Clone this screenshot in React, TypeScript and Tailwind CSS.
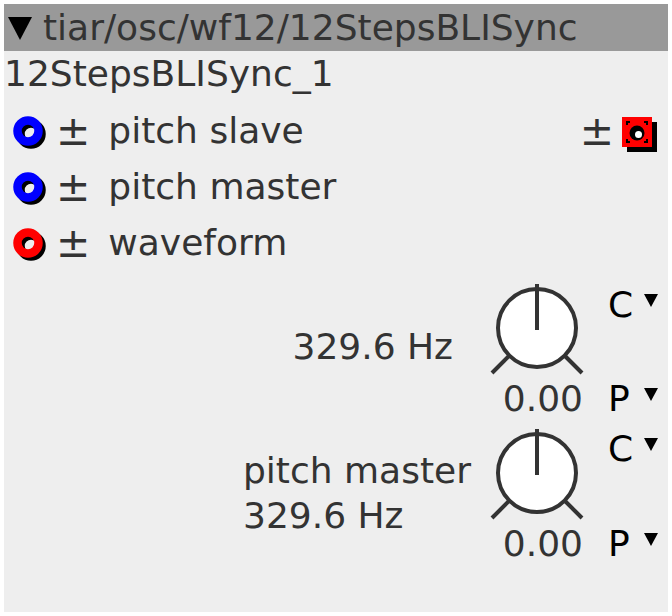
import React from 'react';

const ink = 'text-[#333333]';

function Port({ color }: { color: string }) {
    return (
        <svg width="36" height="36" viewBox="0 0 36 36" className="shrink-0">
            <circle cx="19" cy="21" r="10.5" fill="none" stroke="#000" strokeWidth="8.5" />
            <circle cx="16" cy="18" r="10.5" fill="none" stroke={color} strokeWidth="8.5" />
        </svg>
    );
}

function OutPort() {
    return (
        <svg width="36" height="42" viewBox="0 0 36 42" className="shrink-0">
            <rect x="5" y="12" width="30" height="30" fill="#000" />
            <rect x="0" y="7" width="30" height="30" fill="#ff0000" />
            {/* corner marks */}
            <path d="M5 15 v-3 h3 M22 12 h3 v3 M25 29 v3 h-3 M8 32 h-3 v-3" stroke="#000" strokeWidth="2" fill="none" />
            <circle cx="15" cy="23" r="7.5" fill="#000" />
            <circle cx="16.5" cy="24.5" r="3.5" fill="#fff" />
        </svg>
    );
}

function Knob() {
    return (
        <svg width="98" height="94" viewBox="0 0 98 94" className="shrink-0">
            <circle cx="49" cy="46" r="39" fill="#fff" stroke="#333" strokeWidth="4" />
            <line x1="49" y1="2" x2="49" y2="48" stroke="#333" strokeWidth="4" />
            <line x1="4" y1="91" x2="21" y2="74" stroke="#333" strokeWidth="4" />
            <line x1="94" y1="91" x2="77" y2="74" stroke="#333" strokeWidth="4" />
        </svg>
    );
}

function Drop({ letter }: { letter: string }) {
    return (
        <div className="flex items-start h-[40px]">
            <span className="w-[36px] text-black">{letter}</span>
            <svg width="14" height="13" viewBox="0 0 14 13" className="mt-[9px]">
                <polygon points="0,0 14,0 7,13" fill="#000" />
            </svg>
        </div>
    );
}

function InletRow({ color, label, out }: { color: string; label: string; out?: boolean }) {
    return (
        <div className="h-[56px] flex items-center pl-[8px] pr-[10px]">
            <Port color={color} />
            <span className={`ml-[8px] text-[41px] ${ink}`}>±</span>
            <span className={`ml-[18px] ${ink}`}>{label}</span>
            {out && (
                <div className="ml-auto flex items-center gap-[8px]">
                    <span className={`text-[41px] ${ink}`}>±</span>
                    <OutPort />
                </div>
            )}
        </div>
    );
}

function KnobBlock({ children, labelGap, capPad }: { children: React.ReactNode; labelGap: string; capPad: string }) {
    return (
        <div className="flex justify-end pr-[10px]">
            <div className={labelGap}>{children}</div>
            <div className="flex flex-col w-[98px]">
                <Knob />
                <div className={`mt-[3px] text-right pr-[3px] ${ink}`}>0.00</div>
            </div>
            <div className={`ml-[22px] w-[50px] flex flex-col justify-between ${capPad}`}>
                <Drop letter="C" />
                <Drop letter="P" />
            </div>
        </div>
    );
}

export default function App() {
    return (
        <div className="w-[672px] h-[616px] bg-white p-[4px] font-['DejaVu_Sans',sans-serif] text-[36px] leading-[40px]">
            <div className="w-[664px] h-[608px] bg-[#eeeeee] flex flex-col">
                <div className="h-[47px] bg-[#999999] flex items-center pl-[4px]">
                    <svg width="24" height="23" viewBox="0 0 24 23" className="mt-[2px]">
                        <polygon points="0,0 24,0 12,23" fill="#000" />
                    </svg>
                    <span className={`ml-[11px] ${ink}`}>tiar/osc/wf12/12StepsBLISync</span>
                </div>
                <div className={`h-[52px] pt-[3px] ${ink}`}>12StepsBLISync_1</div>

                <InletRow color="#0000ff" label="pitch slave" out />
                <InletRow color="#0000ff" label="pitch master" />
                <InletRow color="#ff0000" label="waveform" />

                <div className="mt-[11px]">
                    <KnobBlock labelGap="mr-[35px] pt-[45px]" capPad="pt-[3px]">
                        <div className={ink}>329.6 Hz</div>
                    </KnobBlock>
                </div>
                <div className="mt-[8px]">
                    <KnobBlock labelGap="mr-[17px] pt-[21px] leading-[45px]" capPad="pt-[2px]">
                        <div className={ink}>pitch master</div>
                        <div className={ink}>329.6 Hz</div>
                    </KnobBlock>
                </div>
            </div>
        </div>
    );
}
